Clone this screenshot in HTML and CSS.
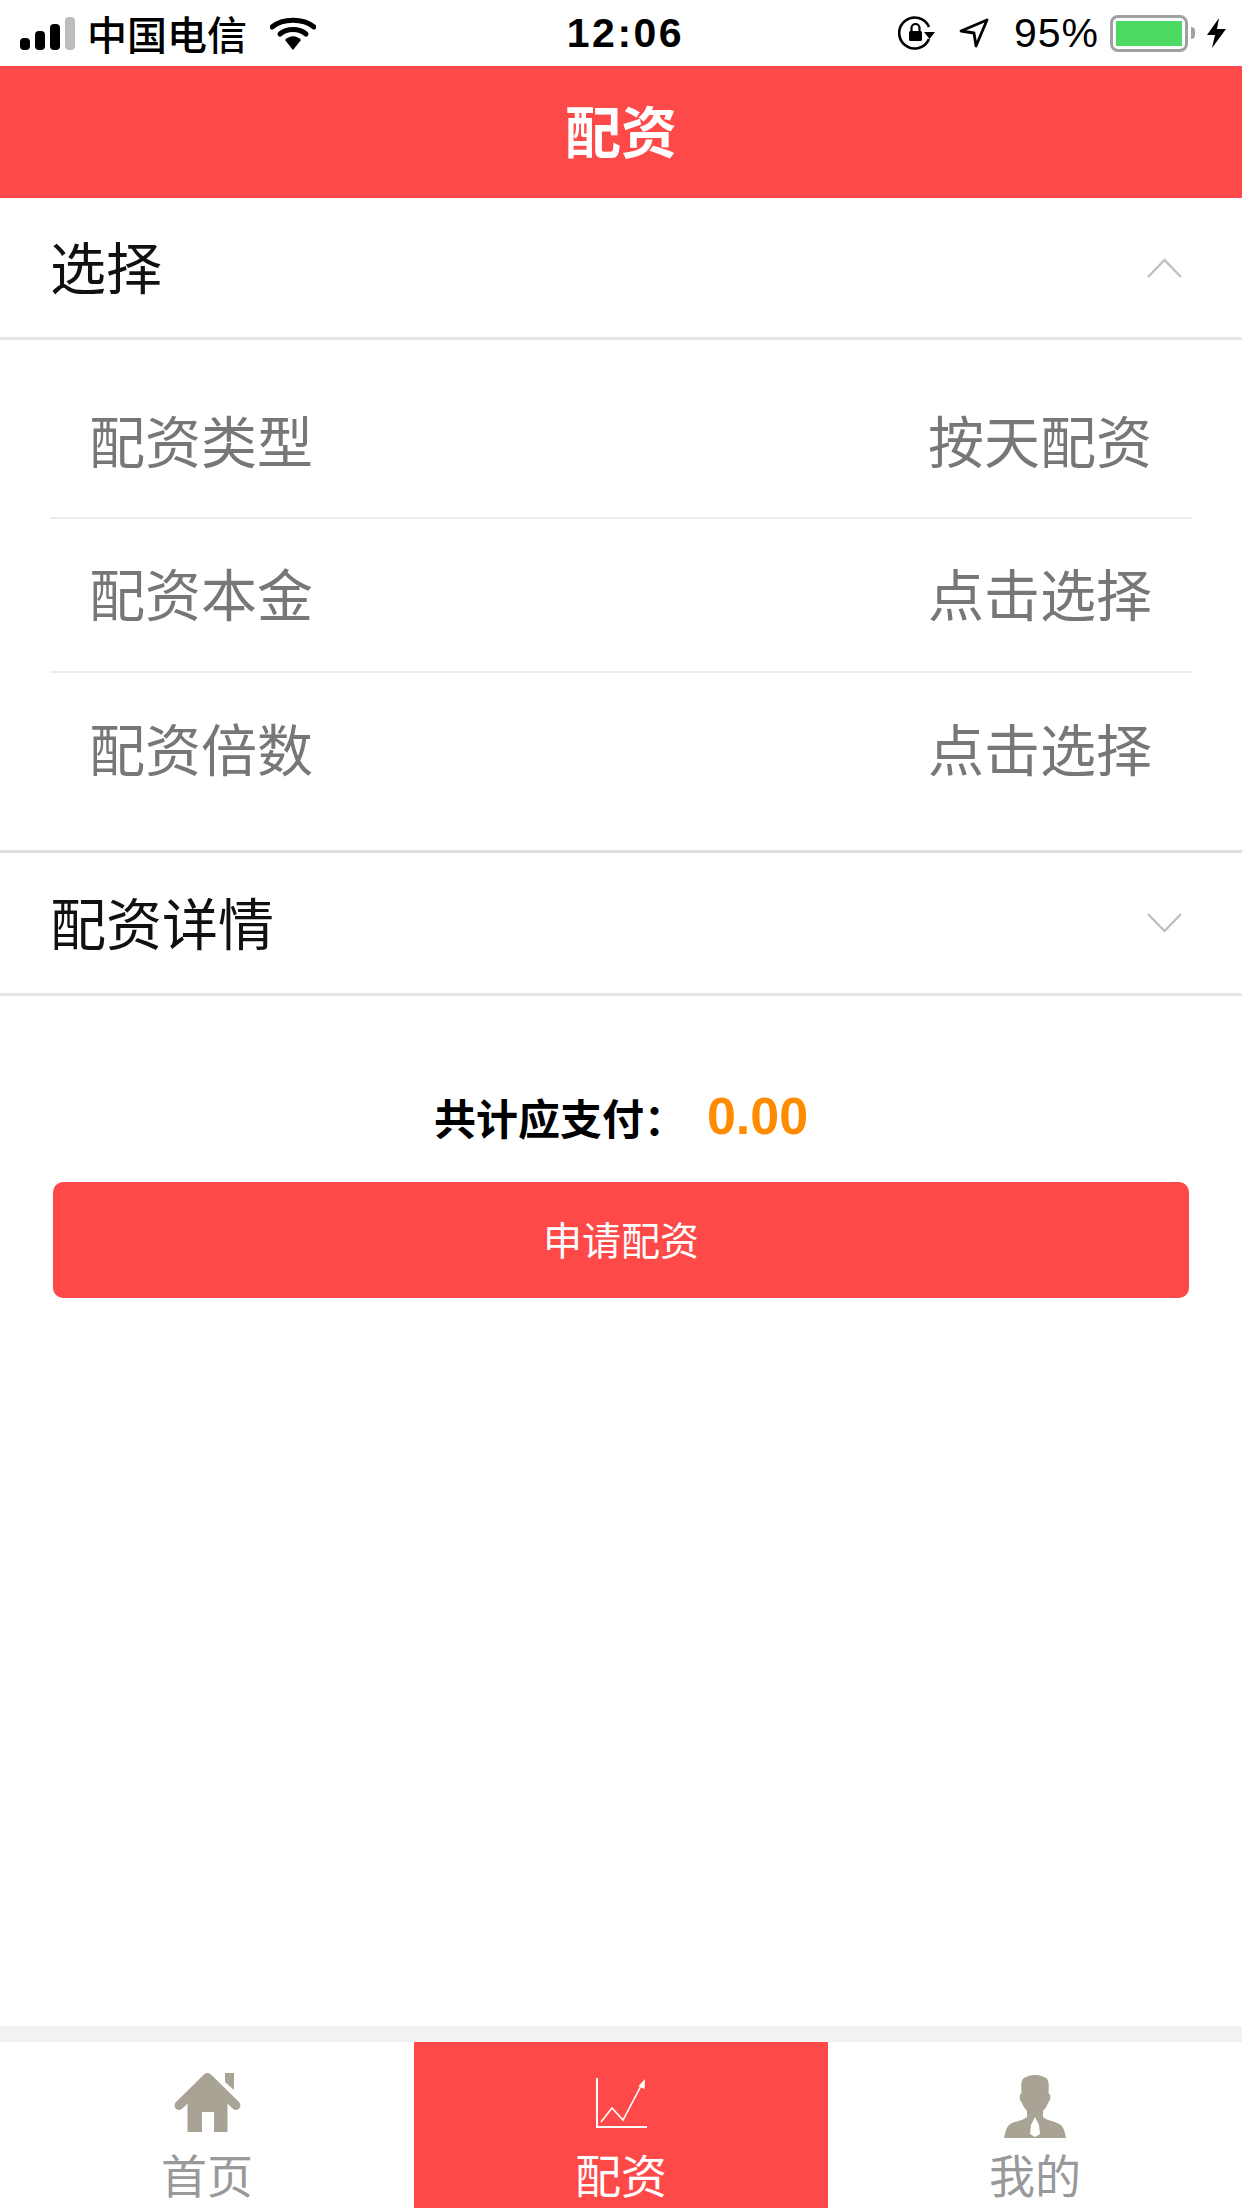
FILE: index.html
```html
<!DOCTYPE html>
<html lang="zh-CN">
<head>
  <meta charset="UTF-8">
  <title>配资</title>
  <link rel="stylesheet" href="styles.css">
</head>
<body>

  <div class="status-bar">
    <div class="status-left">
      <svg class="signal" width="55" height="33" viewBox="0 0 55 33">
        <rect x="0" y="21" width="10" height="12" rx="4" fill="#000"/>
        <rect x="15" y="14" width="10" height="19" rx="4" fill="#000"/>
        <rect x="30" y="7" width="10" height="26" rx="4" fill="#000"/>
        <rect x="45" y="0" width="10" height="33" rx="4" fill="#bdbdbd"/>
      </svg>
      <span class="carrier">中国电信</span>
      <svg class="wifi" width="46" height="33" viewBox="0 0 46 33">
        <path d="M2 10 C13 1 33 1 44 10" fill="none" stroke="#000" stroke-width="5" stroke-linecap="round"/>
        <path d="M10 17 C17 11 29 11 36 17" fill="none" stroke="#000" stroke-width="5" stroke-linecap="round"/>
        <path d="M15 23 C20 18 26 18 31 23 L23 33 Z" fill="#000"/>
      </svg>
    </div>
    <span class="clock">12:06</span>
    <div class="status-right">
      <svg class="rotation" width="38" height="34" viewBox="0 0 38 34">
        <path d="M31 23 A15.5 15.5 0 1 1 31 11" fill="none" stroke="#000" stroke-width="2.6"/>
        <path d="M26 16 L37 16 L31.5 23 Z" fill="#000"/>
        <rect x="11" y="15" width="13" height="10" rx="1.5" fill="#000"/>
        <path d="M13.5 15 V12 a4 4 0 0 1 8 0 V15" fill="none" stroke="#000" stroke-width="2.2"/>
      </svg>
      <svg class="location" width="30" height="30" viewBox="0 0 30 30">
        <path d="M2 13 L28 2 L17 28 L15 15 Z" fill="none" stroke="#000" stroke-width="2.8" stroke-linejoin="round"/>
      </svg>
      <span class="battery-pct">95%</span>
      <div class="battery">
        <div class="battery-body"><div class="battery-fill"></div></div>
        <div class="battery-nub"></div>
      </div>
      <svg class="bolt" width="19" height="30" viewBox="0 0 19 30">
        <path d="M12 0 L0 17 H8 L5 30 L19 11 H10 Z" fill="#000"/>
      </svg>
    </div>
  </div>

  <div class="nav-bar"><span>配资</span></div>

  <div class="page">
    <div class="section-head first">
      <span>选择</span>
      <svg width="35" height="20" viewBox="0 0 35 20">
        <path d="M1 19 L17.5 2 L34 19" fill="none" stroke="#bfbfbf" stroke-width="2.4"/>
      </svg>
    </div>

    <div class="rows">
      <div class="row"><span>配资类型</span><span>按天配资</span></div>
      <div class="row"><span>配资本金</span><span>点击选择</span></div>
      <div class="row"><span>配资倍数</span><span>点击选择</span></div>
    </div>

    <div class="section-head second">
      <span>配资详情</span>
      <svg width="35" height="20" viewBox="0 0 35 20">
        <path d="M1 1 L17.5 18 L34 1" fill="none" stroke="#bfbfbf" stroke-width="2.4"/>
      </svg>
    </div>

    <div class="total">
      <span class="total-label">共计应支付：</span>
      <span class="total-value">0.00</span>
    </div>

    <button class="apply-btn" type="button">申请配资</button>
  </div>

  <div class="tab-gap"></div>

  <div class="tab-bar">
    <div class="tab">
      <svg class="icon-home" width="67" height="59" viewBox="0 0 67 59">
        <path d="M51 0 H60 V17 L51 9 Z" fill="#a9a396"/>
        <path d="M33.5 0 C35 0 36 .6 37 1.6 L65 29 C67.5 32 66.5 35 64 36.5 C62 37.5 60 37 58 35 L53.5 30.5 V59 H40 V39 H28 V59 H13.5 V30.5 L9 35 C7 37 5 37.5 3 36.5 C.5 35 -.5 32 2 29 L30 1.6 C31 .6 32 0 33.5 0 Z" fill="#a9a396"/>
      </svg>
      <span>首页</span>
    </div>
    <div class="tab active">
      <svg class="icon-chart" width="51" height="53" viewBox="0 0 51 53">
        <path d="M1 0 V49 H51" fill="none" stroke="#fff" stroke-width="2"/>
        <path d="M5 44 L16 30 L27 42 L46 6" fill="none" stroke="#fff" stroke-width="1.6"/>
        <path d="M42.5 8 L49 1 L48.5 11 Z" fill="#fff"/>
      </svg>
      <span>配资</span>
    </div>
    <div class="tab">
      <svg class="icon-user" width="62" height="63" viewBox="0 0 62 63">
        <path d="M31 0 C36 0 38 1 42 3 C45 5 45 10 44.5 18 C47 20 47 25 44 28 C43 31 41 34 39 36 V42 C43 46 52 46 57 50 C60 53 61 58 62 63 H0 C1 58 2 53 5 50 C10 46 19 46 23 42 V36 C21 34 19 31 18 28 C15 25 15 20 17.5 18 C17 10 17 5 20 3 C24 1 26 0 31 0 Z" fill="#a9a396"/>
        <path d="M31 42 L35 50 L36 59 L31 62 L26 59 L27 50 Z" fill="#fff"/>
      </svg>
      <span>我的</span>
    </div>
  </div>

</body>
</html>
```

FILE: styles.css
```css
* {
  margin: 0;
  padding: 0;
  box-sizing: border-box;
  font-family: "Noto Sans CJK SC", "Liberation Sans", sans-serif;
}

body {
  width: 1242px;
  height: 2208px;
  background: #fff;
  display: flex;
  flex-direction: column;
  overflow: hidden;
}

/* Status bar */
.status-bar {
  height: 66px;
  padding: 0 12px 0 20px;
  display: flex;
  align-items: center;
  justify-content: space-between;
  color: #000;
}

.status-left,
.status-right {
  display: flex;
  align-items: center;
}

.status-left {
  width: 333px;
}

.status-right {
  width: 332px;
}

.signal {
  margin-right: 12px;
}

.carrier {
  font-size: 40px;
  font-weight: 500;
  line-height: 66px;
  width: 160px;
  white-space: nowrap;
}

.wifi {
  margin-left: 23px;
}

.clock {
  font-family: "Liberation Sans", sans-serif;
  font-size: 41px;
  font-weight: 700;
  letter-spacing: 2.5px;
}

.rotation {
  margin-right: 23px;
}

.location {
  margin-right: 25px;
}

.battery-pct {
  font-family: "Liberation Sans", sans-serif;
  font-size: 41px;
  letter-spacing: 1px;
  margin-right: 11px;
}

.battery {
  display: flex;
  align-items: center;
  margin-right: 12px;
}

.battery-body {
  width: 78px;
  height: 37px;
  border: 3px solid #a0a0a0;
  border-radius: 8px;
  padding: 3px;
}

.battery-fill {
  width: 100%;
  height: 100%;
  background: #4cd964;
}

.battery-nub {
  width: 4px;
  height: 12px;
  margin-left: 3px;
  background: #a0a0a0;
  border-radius: 0 4px 4px 0;
}

/* Nav */
.nav-bar {
  height: 132px;
  flex-shrink: 0;
  background: #fe4949;
  color: #fff;
  font-size: 56px;
  font-weight: 700;
  display: flex;
  align-items: center;
  justify-content: center;
}

.nav-bar span {
  margin-bottom: 8px;
}

.page {
  flex: 1;
}

.section-head {
  padding: 0 60px 0 50px;
  display: flex;
  align-items: center;
  justify-content: space-between;
  font-size: 56px;
  color: #111;
  border-bottom: 3px solid #e6e6e6;
}

.section-head span {
  margin-bottom: 6px;
}

.section-head.first {
  height: 142px;
}

.section-head.second {
  height: 143px;
}

.rows {
  padding: 27px 50px 23px;
  border-bottom: 3px solid #e0e0e0;
}

.row {
  height: 154px;
  padding: 0 40px 8px 39px;
  display: flex;
  align-items: center;
  justify-content: space-between;
  font-size: 56px;
  color: #777;
  border-bottom: 2px solid #ececec;
}

.row:first-child {
  height: 152px;
}

.row:last-child {
  border-bottom: none;
}

.total {
  margin-top: 93px;
  height: 54px;
  display: flex;
  align-items: center;
  justify-content: center;
}

.total-label {
  font-size: 42px;
  font-weight: 700;
  color: #000;
  margin-right: 21px;
}

.total-value {
  font-family: "Liberation Sans", sans-serif;
  font-size: 52px;
  font-weight: 700;
  color: #ff8c00;
}

.apply-btn {
  display: block;
  width: 1136px;
  height: 116px;
  margin: 39px 53px 0;
  padding-bottom: 4px;
  border: none;
  border-radius: 10px;
  background: #fe4949;
  color: #fff;
  font-size: 39px;
}

/* Tabs */
.tab-gap {
  height: 16px;
  flex-shrink: 0;
  background: #f2f2f5;
}

.tab-bar {
  height: 166px;
  flex-shrink: 0;
  display: flex;
}

.tab {
  flex: 1;
  display: flex;
  flex-direction: column;
  align-items: center;
  font-size: 46px;
  color: #999;
  padding-top: 31px;
  overflow: hidden;
}

.tab svg {
  flex-shrink: 0;
}

.icon-home {
  margin-bottom: 8px;
}

.icon-chart {
  margin: 5px 0 9px;
}

.icon-user {
  margin: 2px 0 2px;
}

.tab span {
  line-height: 66px;
}

.tab.active {
  background: #fe4949;
  color: #fff;
}
```
